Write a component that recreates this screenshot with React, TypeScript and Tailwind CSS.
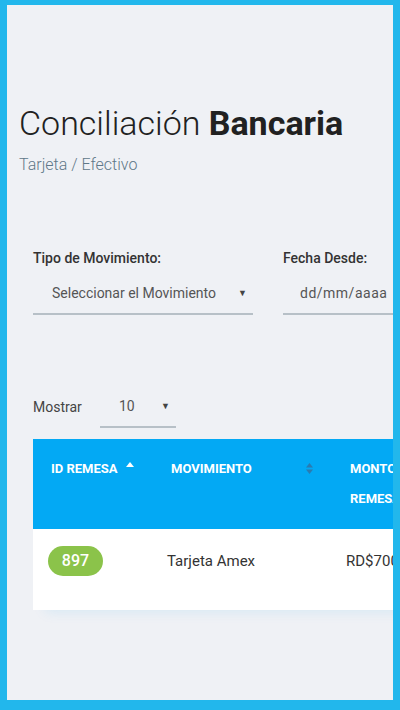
import React from "react";

export default function App() {
  return (
    <div
      className="w-[400px] h-[710px] bg-[#22b7ec] pt-[5px] px-[7px] pb-[10px]"
      style={{ fontFamily: "Roboto, 'Liberation Sans', sans-serif" }}
    >
      <div className="w-full h-full bg-[#eff1f5] overflow-hidden">
        <div className="px-[12px] pt-[99px]">
          <h1 className="text-[34px] leading-[38px] text-[#212121] whitespace-nowrap">
            <span className="font-light">Conciliación </span>
            <span className="font-bold">Bancaria</span>
          </h1>
          <p className="mt-[11px] text-[16px] leading-[24px] font-light text-[#5f7888]">Tarjeta / Efectivo</p>
        </div>

        <div className="pl-[26px] mt-[71px] flex gap-[30px] whitespace-nowrap">
          <div className="w-[220px] shrink-0">
            <div className="text-[14px] leading-[20px] font-medium text-[#333]">Tipo de Movimiento:</div>
            <div className="mt-[6px] h-[41px] border-b-2 border-[#b7c0c7] flex items-center pl-[19px] pr-[6px] text-[14px] text-[#555]">
              <span className="flex-1">Seleccionar el Movimiento</span>
              <span className="text-[9px] text-[#444]">▼</span>
            </div>
          </div>
          <div className="w-[220px] shrink-0">
            <div className="text-[14px] leading-[20px] font-medium text-[#333]">Fecha Desde:</div>
            <div className="mt-[6px] h-[41px] border-b-2 border-[#b7c0c7] flex items-center pl-[17px] text-[14px] text-[#555] tracking-[0.5px]">
              dd/mm/aaaa
            </div>
          </div>
        </div>

        <div className="pl-[26px] mt-[72px] flex items-center">
          <span className="w-[67px] text-[14px] text-[#444]">Mostrar</span>
          <div className="w-[76px] h-[41px] border-b-2 border-[#b7c0c7] flex items-center pl-[19px] pr-[6px] text-[14px] text-[#555]">
            <span className="flex-1">10</span>
            <span className="text-[9px] text-[#444]">▼</span>
          </div>
        </div>

        <div className="ml-[26px] mt-[11px] w-[520px] bg-white shadow-[0_14px_12px_-12px_rgba(3,169,244,0.10)]">
          <div className="flex bg-[#03a9f4] text-white text-[13px] font-bold leading-[30px] py-[15px] uppercase">
            <div className="relative w-[120px] pl-[18px]">
              ID Remesa
              <svg className="absolute right-[19px] top-[8px]" width="8" height="5" viewBox="0 0 8 5">
                <path d="M0 5 L4 0 L8 5 Z" fill="#fff" />
              </svg>
            </div>
            <div className="relative w-[180px] pl-[18px]">
              Movimiento
              <svg className="absolute right-[20px] top-[9px]" width="7" height="11" viewBox="0 0 7 11">
                <path d="M0 4.5 L3.5 0 L7 4.5 Z" fill="#2b7bb0" />
                <path d="M0 6.5 L3.5 11 L7 6.5 Z" fill="#2b7bb0" />
              </svg>
            </div>
            <div className="w-[200px] pl-[17px]">
              Monto
              <br />
              Remesa
            </div>
          </div>
          <div className="flex items-start h-[81px] pt-[17px]">
            <div className="w-[120px] pl-[15px]">
              <span className="inline-flex items-center justify-center w-[55px] h-[30px] rounded-full bg-[#8bc34a] text-white text-[16px] font-medium">
                897
              </span>
            </div>
            <div className="w-[180px] pl-[14px] h-[30px] flex items-center text-[15px] text-[#333]">Tarjeta Amex</div>
            <div className="w-[200px] pl-[13px] h-[30px] flex items-center text-[15px] text-[#333]">RD$700.00</div>
          </div>
        </div>
      </div>
    </div>
  );
}
